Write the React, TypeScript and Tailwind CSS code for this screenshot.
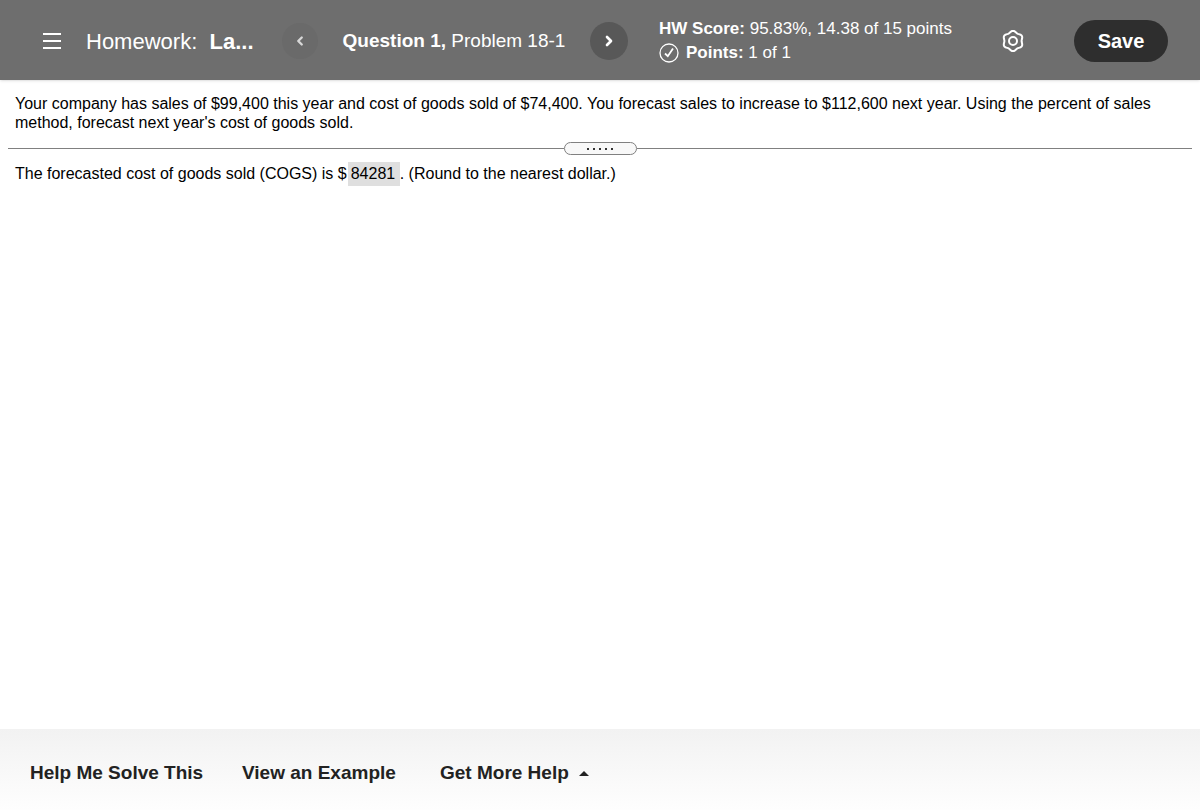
import { ChevronLeft, ChevronRight } from "lucide-react"

// six rounded teeth, one of them pointing straight up
const gearPoints = Array.from({ length: 72 }, (_, i) => {
    const angle = (i * Math.PI) / 36
    const radius = 9.4 + 0.8 * Math.cos(6 * angle)
    return `${(11 + radius * Math.sin(angle)).toFixed(2)},${(11 - radius * Math.cos(angle)).toFixed(2)}`
}).join(" ")

function MenuIcon() {
    return (
        <svg width="18" height="18" viewBox="0 0 18 18" stroke="white" strokeWidth="2" aria-hidden="true">
            <path d="M0 2h18M0 9h18M0 16h18" />
        </svg>
    )
}

function CheckIcon() {
    return (
        <svg width="20" height="20" viewBox="0 0 20 20" fill="none" stroke="white" aria-hidden="true">
            <circle cx="10" cy="10" r="9" strokeWidth="1.3" />
            <path d="M6 10.5l2.8 2.7L14 5.5" strokeWidth="1.8" />
        </svg>
    )
}

function GearIcon() {
    return (
        <svg width="22" height="22" viewBox="0 0 22 22" fill="none" stroke="white" strokeWidth="2" strokeLinejoin="round" aria-hidden="true">
            <polygon points={gearPoints} />
            <circle cx="11" cy="11" r="4" />
        </svg>
    )
}

function Header() {
    return (
        <header className="flex h-20 items-center bg-[#6e6e6e] pl-[43px] pr-8 pt-0.5 text-white shadow-sm">
            <button type="button" aria-label="Menu" className="shrink-0">
                <MenuIcon />
            </button>
            <h1 className="ml-[25px] w-[196px] shrink-0 whitespace-pre text-[22px]">
                Homework:  <span className="font-bold">La...</span>
            </h1>
            <nav className="flex shrink-0 items-center">
                <button type="button" aria-label="Previous question" className="flex size-9 items-center justify-center rounded-full bg-[#6a6a6a]">
                    <ChevronLeft size={14} strokeWidth={4} className="text-[#d8d8d8]" />
                </button>
                <div className="w-[272px] text-center text-[19px]">
                    <span className="font-bold">Question 1,</span> Problem 18-1
                </div>
                <button type="button" aria-label="Next question" className="flex size-[38px] items-center justify-center rounded-full bg-[#585858]">
                    <ChevronRight size={16} strokeWidth={4} />
                </button>
            </nav>
            <div className="ml-[31px] shrink-0 text-[17px] leading-6">
                <div><span className="font-bold">HW Score:</span> 95.83%, 14.38 of 15 points</div>
                <div className="flex items-center gap-[7px]">
                    <CheckIcon />
                    <div><span className="font-bold">Points:</span> 1 of 1</div>
                </div>
            </div>
            <div className="ml-auto flex shrink-0 items-center gap-[50px]">
                <button type="button" aria-label="Settings">
                    <GearIcon />
                </button>
                <button type="button" className="h-[42px] w-[94px] rounded-full bg-[#2e2e2e] text-xl font-bold">Save</button>
            </div>
        </header>
    )
}

function Divider() {
    return (
        <div className="mx-2 flex items-center">
            <div className="h-px flex-1 bg-[#808080]" />
            <button type="button" aria-label="Resize panels" className="flex h-[13px] w-[73px] items-center justify-center gap-1 rounded-full border border-[#808080] bg-[#f8f8f8]">
                {[0, 1, 2, 3, 4].map((dot) => (
                    <span key={dot} className="size-0.5 bg-[#333333]" />
                ))}
            </button>
            <div className="h-px flex-1 bg-[#808080]" />
        </div>
    )
}

export default function App() {
    return (
        <div className="flex min-h-screen flex-col bg-white font-['Liberation_Sans',Arial,sans-serif] text-black">
            <Header />
            <main className="flex-1 text-base">
                <p className="px-[15px] pb-2.5 pt-[14px] leading-[19px]">
                    Your company has sales of $99,400 this year and cost of goods sold of $74,400. You forecast sales to increase to $112,600 next year. Using the percent of sales method, forecast next year's cost of goods sold.
                </p>
                <Divider />
                <div className="flex items-center px-[15px] pt-[7px] leading-5">
                    <label htmlFor="cogs">The forecasted cost of goods sold (COGS) is $</label>
                    <input id="cogs" readOnly defaultValue="84281" className="ml-px h-6 w-[52px] bg-[#dfdfdf] px-[3px]" />
                    <span>. (Round to the nearest dollar.)</span>
                </div>
            </main>
            <footer className="flex h-[81px] items-center bg-linear-to-b from-[#f2f2f2] to-[#fefefe] pl-[30px] pt-2 text-[19px] font-bold text-[#222222]">
                <button type="button" className="w-[212px] text-left">Help Me Solve This</button>
                <button type="button" className="w-[198px] text-left">View an Example</button>
                <button type="button" className="flex items-center gap-2.5">
                    Get More Help
                    <svg width="10" height="5" viewBox="0 0 10 5" fill="currentColor" aria-hidden="true">
                        <path d="M0 5L5 0l5 5z" />
                    </svg>
                </button>
            </footer>
        </div>
    )
}
